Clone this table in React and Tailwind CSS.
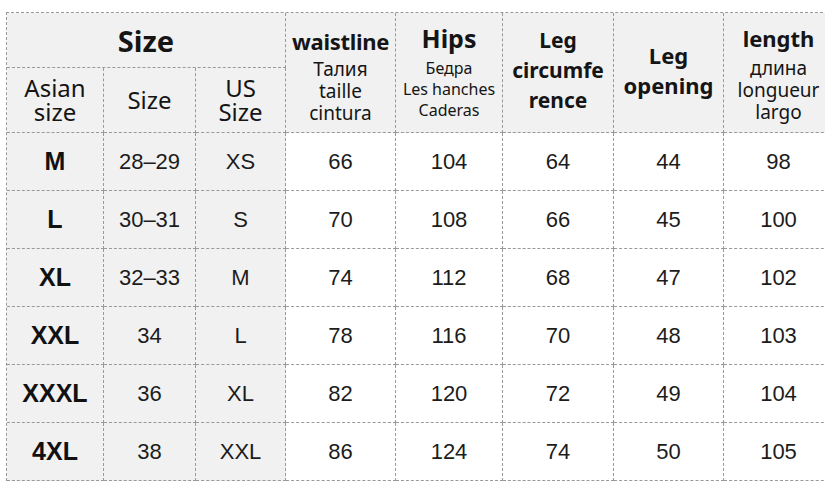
import React from 'react';

const rows = [
  ['M', '28–29', 'XS', 66, 104, 64, 44, 98],
  ['L', '30–31', 'S', 70, 108, 66, 45, 100],
  ['XL', '32–33', 'M', 74, 112, 68, 47, 102],
  ['XXL', '34', 'L', 78, 116, 70, 48, 103],
  ['XXXL', '36', 'XL', 82, 120, 72, 49, 104],
  ['4XL', '38', 'XXL', 86, 124, 74, 50, 105],
];

const cell = 'border-r border-b border-dashed border-[#999] flex flex-col items-center justify-center text-center';
const head = `${cell} bg-[#f1f1f1] font-['Noto_Sans',sans-serif] text-[#151515]`;
const num = `${cell} font-['Liberation_Sans',Arial,sans-serif] text-[22px] text-[#1c1c1c]`;

export default function App() {
  return (
    <div className="w-[825px] h-[481px] bg-white overflow-hidden">
      <div className="ml-[6px] mt-[12px] w-[827px] grid grid-cols-[97px_92px_90px_110px_107px_111px_110px_110px] grid-rows-[55px_65px_repeat(6,58px)] border-l border-t border-dashed border-[#999]">
        {/* Header */}
        <div className={`${head} col-span-3 text-[29px] font-bold leading-none`}>Size</div>
        <div className={`${head} row-span-2 pt-[4px]`}>
          <span className="text-[22px] font-bold leading-[30px] tracking-[-0.3px]">waistline</span>
          <span className="mt-[2px] w-[80px] text-[19px] leading-[22px]">Талия taille cintura</span>
        </div>
        <div className={`${head} row-span-2 pb-[4px]`}>
          <span className="text-[25px] font-bold leading-[34px]">Hips</span>
          <span className="mt-[3px] w-[100px] text-[16px] leading-[21px]">Бедра Les&nbsp;hanches Caderas</span>
        </div>
        <div className={`${head} row-span-2 pb-[5px]`}>
          <span className="w-[100px] text-[21px] font-bold leading-[30px]">Leg circumfe rence</span>
        </div>
        <div className={`${head} row-span-2 pb-[6px]`}>
          <span className="w-[95px] text-[22px] font-bold leading-[30px]">Leg opening</span>
        </div>
        <div className={`${head} row-span-2`}>
          <span className="text-[22px] font-bold leading-[30px]">length</span>
          <span className="mt-[4px] w-[92px] text-[19px] leading-[22px]">длина longueur largo</span>
        </div>
        <div className={`${head} text-[24px] leading-[24px]`}>
          <span className="w-[72px]">Asian size</span>
        </div>
        <div className={`${head} text-[24px]`}>Size</div>
        <div className={`${head} text-[24px] leading-[24px]`}>
          <span className="w-[60px]">US Size</span>
        </div>

        {/* Body */}
        {rows.map((r) => (
          <React.Fragment key={r[0]}>
            <div className={`${cell} bg-[#f1f1f1] font-['Liberation_Sans',Arial,sans-serif] font-bold text-[25px] text-[#111]`}>{r[0]}</div>
            <div className={`${num} bg-[#f1f1f1]`}>{r[1]}</div>
            <div className={`${num} bg-[#f1f1f1] text-[20px]`}>{r[2]}</div>
            {r.slice(3).map((v, i) => (
              <div key={i} className={num}>{v}</div>
            ))}
          </React.Fragment>
        ))}
      </div>
    </div>
  );
}
